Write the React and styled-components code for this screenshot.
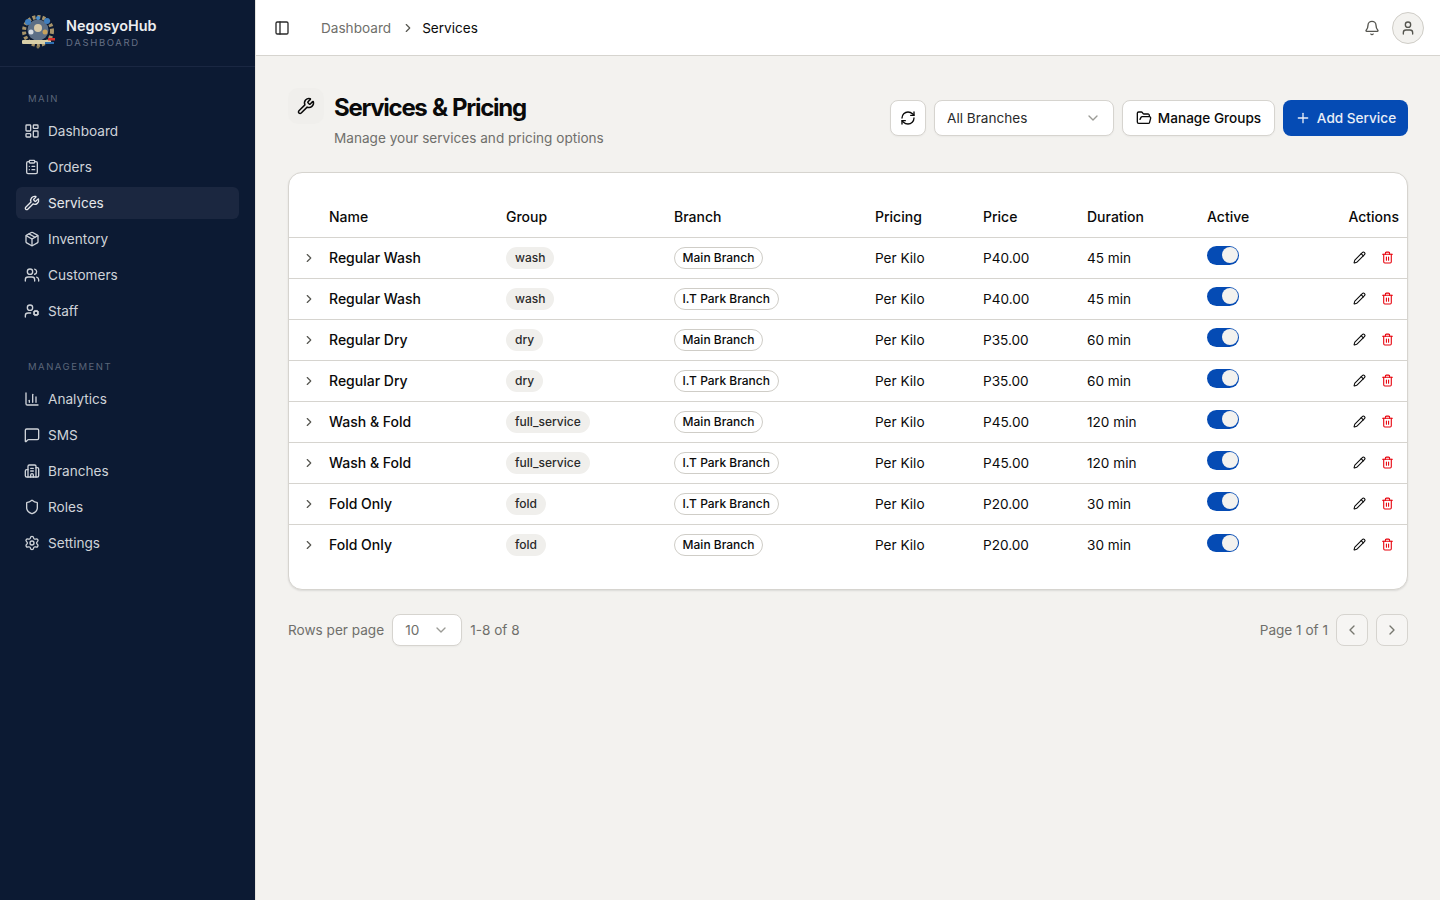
import React from 'react'
import styled, { createGlobalStyle } from 'styled-components'
import {
  Bell,
  Building2,
  ChartColumn,
  ChevronDown,
  ChevronLeft,
  ChevronRight,
  ClipboardList,
  FolderOpen,
  LayoutDashboard,
  MessageSquare,
  Package,
  PanelLeft,
  Pencil,
  Plus,
  RefreshCw,
  Settings,
  Shield,
  Trash2,
  User,
  UserCog,
  Users,
  Wrench,
} from 'lucide-react'

const mainLinks = [
  { label: 'Dashboard', icon: LayoutDashboard },
  { label: 'Orders', icon: ClipboardList },
  { label: 'Services', icon: Wrench, active: true },
  { label: 'Inventory', icon: Package },
  { label: 'Customers', icon: Users },
  { label: 'Staff', icon: UserCog },
]

const managementLinks = [
  { label: 'Analytics', icon: ChartColumn },
  { label: 'SMS', icon: MessageSquare },
  { label: 'Branches', icon: Building2 },
  { label: 'Roles', icon: Shield },
  { label: 'Settings', icon: Settings },
]

const services = [
  { name: 'Regular Wash', group: 'wash', branch: 'Main Branch', price: 'P40.00', duration: '45 min' },
  { name: 'Regular Wash', group: 'wash', branch: 'I.T Park Branch', price: 'P40.00', duration: '45 min' },
  { name: 'Regular Dry', group: 'dry', branch: 'Main Branch', price: 'P35.00', duration: '60 min' },
  { name: 'Regular Dry', group: 'dry', branch: 'I.T Park Branch', price: 'P35.00', duration: '60 min' },
  { name: 'Wash & Fold', group: 'full_service', branch: 'Main Branch', price: 'P45.00', duration: '120 min' },
  { name: 'Wash & Fold', group: 'full_service', branch: 'I.T Park Branch', price: 'P45.00', duration: '120 min' },
  { name: 'Fold Only', group: 'fold', branch: 'I.T Park Branch', price: 'P20.00', duration: '30 min' },
  { name: 'Fold Only', group: 'fold', branch: 'Main Branch', price: 'P20.00', duration: '30 min' },
]

const columnWidths = [32, 177, 168, 201, 108, 104, 120, 120, 88]

const GlobalStyle = createGlobalStyle`
  * {
    box-sizing: border-box;
  }
  body {
    margin: 0;
    background: #f3f2ef;
    color: #0a0a0a;
    font-family: Inter, "Liberation Sans", sans-serif;
    font-size: 13.6px;
  }
`

const Shell = styled.div`
  display: flex;
  min-height: 900px;
`
const Sidebar = styled.aside`
  width: 256px;
  flex-shrink: 0;
  background: #0c1a33;
  border-right: 1px solid #e5e3de;
  color: #d8dbe0;
`
const Brand = styled.div`
  display: flex;
  align-items: center;
  gap: 10px;
  height: 67px;
  padding: 0 20px 2px;
  border-bottom: 1px solid #1a2742;
`
const BrandText = styled.div`
  display: flex;
  flex-direction: column;
  gap: 1px;
`
const BrandName = styled.span`
  color: #eceef1;
  font-size: 14.4px;
  font-weight: 600;
  line-height: 20px;
`
const BrandSub = styled.span`
  color: #667085;
  font-size: 9.5px;
  line-height: 12px;
  letter-spacing: 0.175em;
`
const Nav = styled.nav`
  display: flex;
  flex-direction: column;
  padding: 16px 16px 0;
`
const NavSection = styled.div`
  display: flex;
  flex-direction: column;
  margin-bottom: 20px;
`
const NavTitle = styled.div`
  height: 32px;
  padding-left: 12px;
  color: #5b6679;
  font-size: 9.5px;
  line-height: 32px;
  letter-spacing: 0.16em;
`
const NavItem = styled.a`
  display: flex;
  align-items: center;
  gap: 8px;
  height: 32px;
  margin-bottom: 4px;
  padding: 0 8px;
  border-radius: 6px;
  background: ${(p) => (p.$active ? '#1b2740' : 'transparent')};
  color: ${(p) => (p.$active ? '#e6e8eb' : '#cfd3d9')};
  font-size: 13.6px;
`
const Main = styled.div`
  flex: 1;
  min-width: 0;
  display: flex;
  flex-direction: column;
`
const TopBar = styled.header`
  display: flex;
  align-items: center;
  height: 56px;
  padding: 0 16px;
  background: #fff;
  border-bottom: 1px solid #d6d4cf;
`
const ToggleButton = styled.button`
  display: flex;
  align-items: center;
  justify-content: center;
  width: 20px;
  height: 20px;
  padding: 0;
  border: 0;
  background: none;
  color: #2a2a2a;
`
const Crumbs = styled.div`
  display: flex;
  align-items: center;
  gap: 10px;
  margin-left: 29px;
`
const CrumbSeparator = styled(ChevronRight)`
  margin-right: -3px;
  color: #55554f;
`
const Crumb = styled.span`
  color: ${(p) => (p.$current ? '#0a0a0a' : '#6f6f6b')};
  font-size: 13.6px;
`
const TopActions = styled.div`
  display: flex;
  align-items: center;
  gap: 12px;
  margin-left: auto;
`
const Avatar = styled.div`
  display: flex;
  align-items: center;
  justify-content: center;
  width: 32px;
  height: 32px;
  border: 1px solid #cfcdc7;
  border-radius: 50%;
  background: #f3f2ef;
  color: #55554f;
`
const Content = styled.main`
  padding: 32px;
`
const PageHead = styled.div`
  display: flex;
  align-items: flex-start;
  justify-content: space-between;
  margin-bottom: 24px;
`
const TitleGroup = styled.div`
  display: flex;
  gap: 10px;
`
const TitleIcon = styled.div`
  display: flex;
  align-items: center;
  justify-content: center;
  width: 36px;
  height: 36px;
  border-radius: 10px;
  background: #f0efec;
  color: #0a0a0a;
`
const TitleText = styled.div`
  display: flex;
  flex-direction: column;
`
const Title = styled.h1`
  margin: 0;
  font-size: 24px;
  font-weight: 700;
  line-height: 40px;
  letter-spacing: -1.3px;
  word-spacing: 1px;
`
const Subtitle = styled.p`
  margin: 0;
  color: #6f6f6b;
  font-size: 13.6px;
  line-height: 20px;
`
const Toolbar = styled.div`
  display: flex;
  align-items: center;
  gap: 8px;
  margin-top: 12px;
`
const OutlineButton = styled.button`
  display: flex;
  align-items: center;
  justify-content: center;
  gap: 6px;
  height: 36px;
  padding: 0;
  width: ${(p) => (p.$square ? '36px' : '153px')};
  border: 1px solid #d6d4cf;
  border-radius: 8px;
  background: #fff;
  box-shadow: 0 1px 2px rgba(0, 0, 0, 0.04);
  color: #0a0a0a;
  font: 500 13.6px Inter, "Liberation Sans", sans-serif;
  white-space: nowrap;
`
const PrimaryButton = styled.button`
  display: flex;
  align-items: center;
  justify-content: center;
  gap: 6px;
  height: 36px;
  width: 125px;
  padding: 0;
  border: 0;
  border-radius: 8px;
  background: #054bb4;
  color: #e9eef7;
  font: 500 13.6px Inter, "Liberation Sans", sans-serif;
  white-space: nowrap;
`
const SelectBox = styled.div`
  display: flex;
  align-items: center;
  justify-content: space-between;
  width: ${(p) => p.$width}px;
  height: ${(p) => p.$height}px;
  padding: 0 12px;
  border: 1px solid #d6d4cf;
  border-radius: 8px;
  background: #fff;
  box-shadow: 0 1px 2px rgba(0, 0, 0, 0.04);
  color: ${(p) => p.$color};
  font-size: 13.6px;
  svg {
    color: #9b9b96;
  }
`
const Card = styled.section`
  padding: 24px 0;
  border: 1px solid #d6d4cf;
  border-radius: 14px;
  background: #fff;
  box-shadow: 0 1px 2px rgba(0, 0, 0, 0.1);
`
const Table = styled.table`
  width: 100%;
  table-layout: fixed;
  border-collapse: collapse;
`
const HeadCell = styled.th`
  height: 40px;
  padding: 0 8px;
  border-bottom: 1px solid #d6d4cf;
  font-size: 14px;
  font-weight: 500;
  text-align: ${(p) => (p.$right ? 'right' : 'left')};
`
const Row = styled.tr`
  height: 41px;
  border-bottom: 1px solid #d6d4cf;
  &:last-child {
    border-bottom: 0;
  }
`
const Cell = styled.td`
  padding: 0 8px;
  font-size: ${(p) => (p.$strong ? '14px' : '13.6px')};
  font-weight: ${(p) => (p.$strong ? 500 : 400)};
  white-space: nowrap;
`
const ExpandCell = styled.td`
  padding: 0 0 0 13px;
  color: #55554f;
  svg {
    display: block;
  }
`
const GroupBadge = styled.span`
  display: inline-flex;
  align-items: center;
  height: 22px;
  padding: 0 9px;
  border-radius: 11px;
  background: #f0efec;
  color: #2a2a2a;
  font-size: 12px;
  font-weight: 500;
`
const BranchBadge = styled(GroupBadge)`
  border: 1px solid #cfcdc7;
  padding: 0 7.6px;
  background: #fff;
  color: #0a0a0a;
`
const Switch = styled.span`
  display: flex;
  justify-content: flex-end;
  align-items: center;
  width: 32px;
  height: 18.4px;
  margin-top: -4px;
  padding: 0 1px;
  border-radius: 10px;
  background: #054bb4;
`
const Knob = styled.span`
  width: 16px;
  height: 16px;
  border-radius: 50%;
  background: #f3f2ef;
`
const ActionGroup = styled.div`
  display: flex;
  justify-content: flex-end;
  align-items: center;
  gap: 15px;
  padding-right: 5px;
`
const Pager = styled.div`
  display: flex;
  align-items: center;
  justify-content: space-between;
  margin-top: 24px;
`
const PagerSide = styled.div`
  display: flex;
  align-items: center;
  gap: 8px;
  color: #6f6f6b;
  font-size: 13.6px;
`
const PageButton = styled.button`
  display: flex;
  align-items: center;
  justify-content: center;
  width: 32px;
  height: 32px;
  padding: 0;
  border: 1px solid #d6d4cf;
  border-radius: 8px;
  background: #f6f5f3;
  color: #77776f;
`

const Logo = () => (
  <svg width="36" height="36" viewBox="0 0 36 36">
    <circle cx="18" cy="17" r="14" fill="none" stroke="#a8946a" strokeWidth="4" strokeDasharray="3 2" />
    <circle cx="18" cy="16" r="10.5" fill="#5d6f86" />
    <circle cx="8" cy="8" r="3" fill="#3f7fc0" />
    <circle cx="27" cy="7" r="3" fill="#3f7fc0" />
    <circle cx="18" cy="4" r="2" fill="#4a90d0" />
    <circle cx="18" cy="14" r="4" fill="#d8c9a8" />
    <circle cx="11" cy="18" r="2.5" fill="#d6dbe2" />
    <circle cx="25" cy="18" r="2.5" fill="#c7a15c" />
    <rect x="2" y="26" width="29" height="4" rx="1" fill="#d9cfa8" />
    <rect x="28" y="24" width="7" height="2.5" fill="#d9322c" />
    <rect x="25" y="28" width="9" height="2" fill="#2f6fb0" />
    <circle cx="18" cy="33" r="1.5" fill="#8a7a55" />
  </svg>
)

const SideLink = ({ item }) => {
  const Icon = item.icon
  return (
    <NavItem $active={item.active}>
      <Icon size={16} strokeWidth={2} />
      {item.label}
    </NavItem>
  )
}

const App = () => {
  return (
    <Shell>
      <GlobalStyle />
      <Sidebar>
        <Brand>
          <Logo />
          <BrandText>
            <BrandName>NegosyoHub</BrandName>
            <BrandSub>DASHBOARD</BrandSub>
          </BrandText>
        </Brand>
        <Nav>
          <NavSection>
            <NavTitle>MAIN</NavTitle>
            {mainLinks.map((item) => (
              <SideLink key={item.label} item={item} />
            ))}
          </NavSection>
          <NavSection>
            <NavTitle>MANAGEMENT</NavTitle>
            {managementLinks.map((item) => (
              <SideLink key={item.label} item={item} />
            ))}
          </NavSection>
        </Nav>
      </Sidebar>
      <Main>
        <TopBar>
          <ToggleButton>
            <PanelLeft size={16} />
          </ToggleButton>
          <Crumbs>
            <Crumb>Dashboard</Crumb>
            <CrumbSeparator size={14} />
            <Crumb $current>Services</Crumb>
          </Crumbs>
          <TopActions>
            <Bell size={16} color="#55554f" />
            <Avatar>
              <User size={16} />
            </Avatar>
          </TopActions>
        </TopBar>
        <Content>
          <PageHead>
            <TitleGroup>
              <TitleIcon>
                <Wrench size={18} />
              </TitleIcon>
              <TitleText>
                <Title>Services &amp; Pricing</Title>
                <Subtitle>Manage your services and pricing options</Subtitle>
              </TitleText>
            </TitleGroup>
            <Toolbar>
              <OutlineButton $square>
                <RefreshCw size={16} />
              </OutlineButton>
              <SelectBox $width={180} $height={36} $color="#2a2a2a">
                All Branches
                <ChevronDown size={16} />
              </SelectBox>
              <OutlineButton>
                <FolderOpen size={16} />
                Manage Groups
              </OutlineButton>
              <PrimaryButton>
                <Plus size={16} />
                Add Service
              </PrimaryButton>
            </Toolbar>
          </PageHead>
          <Card>
            <Table>
              <colgroup>
                {columnWidths.map((w, i) => (
                  <col key={i} width={w} />
                ))}
              </colgroup>
              <thead>
                <tr>
                  <HeadCell />
                  <HeadCell>Name</HeadCell>
                  <HeadCell>Group</HeadCell>
                  <HeadCell>Branch</HeadCell>
                  <HeadCell>Pricing</HeadCell>
                  <HeadCell>Price</HeadCell>
                  <HeadCell>Duration</HeadCell>
                  <HeadCell>Active</HeadCell>
                  <HeadCell $right>Actions</HeadCell>
                </tr>
              </thead>
              <tbody>
                {services.map((s, i) => (
                  <Row key={i}>
                    <ExpandCell>
                      <ChevronRight size={14} />
                    </ExpandCell>
                    <Cell $strong>{s.name}</Cell>
                    <Cell>
                      <GroupBadge>{s.group}</GroupBadge>
                    </Cell>
                    <Cell>
                      <BranchBadge>{s.branch}</BranchBadge>
                    </Cell>
                    <Cell>Per Kilo</Cell>
                    <Cell>{s.price}</Cell>
                    <Cell>{s.duration}</Cell>
                    <Cell>
                      <Switch>
                        <Knob />
                      </Switch>
                    </Cell>
                    <Cell>
                      <ActionGroup>
                        <Pencil size={13} color="#0a0a0a" />
                        <Trash2 size={13} color="#e7000b" />
                      </ActionGroup>
                    </Cell>
                  </Row>
                ))}
              </tbody>
            </Table>
          </Card>
          <Pager>
            <PagerSide>
              Rows per page
              <SelectBox $width={70} $height={32} $color="#6f6f6b">
                10
                <ChevronDown size={16} />
              </SelectBox>
              1-8 of 8
            </PagerSide>
            <PagerSide>
              Page 1 of 1
              <PageButton>
                <ChevronLeft size={16} />
              </PageButton>
              <PageButton>
                <ChevronRight size={16} />
              </PageButton>
            </PagerSide>
          </Pager>
        </Content>
      </Main>
    </Shell>
  )
}

export default App
